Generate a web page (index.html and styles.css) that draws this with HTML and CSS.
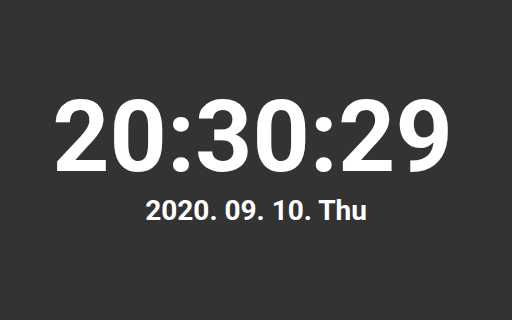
FILE: index.html
```html
<!DOCTYPE html>
<html lang="en">
<head>
    <meta charset="UTF-8">
    <meta name="viewport" content="width=device-width, initial-scale=1.0">
    <title>Clock</title>
    <link rel="stylesheet" href="styles.css">
</head>
<body>
    <div class="clock">
        <div class="time">20:30:29</div>
        <div class="date">2020. 09. 10. Thu</div>
    </div>
</body>
</html>
```

FILE: styles.css
```css
* {
    margin: 0;
    padding: 0;
    box-sizing: border-box;
}

body {
    font-family: Roboto, sans-serif;
    background: #333333;
    color: #ffffff;
    width: 512px;
    height: 320px;
    padding-bottom: 6px;
    display: flex;
    justify-content: center;
    align-items: center;
}

.clock {
    display: flex;
    flex-direction: column;
    align-items: center;
}

.time {
    font-size: 100px;
    font-weight: bold;
    line-height: 1;
    margin-right: 7px;
}

.date {
    font-size: 28px;
    font-weight: bold;
    margin-top: 7px;
}
```
